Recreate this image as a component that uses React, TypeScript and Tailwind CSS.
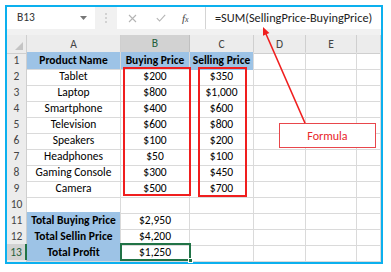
const FONT = '"Carlito", "Lato", "Liberation Sans", sans-serif';

type Row = {
  n: number;
  a?: string;
  b?: string;
  c?: string;
  head?: boolean;
  total?: boolean;
};

const rows: Row[] = [
  { n: 1, a: "Product Name", b: "Buying Price", c: "Selling Price", head: true },
  { n: 2, a: "Tablet", b: "$200", c: "$350" },
  { n: 3, a: "Laptop", b: "$800", c: "$1,000" },
  { n: 4, a: "Smartphone", b: "$400", c: "$600" },
  { n: 5, a: "Television", b: "$600", c: "$800" },
  { n: 6, a: "Speakers", b: "$100", c: "$200" },
  { n: 7, a: "Headphones", b: "$50", c: "$100" },
  { n: 8, a: "Gaming Console", b: "$300", c: "$450" },
  { n: 9, a: "Camera", b: "$500", c: "$700" },
  { n: 10 },
  { n: 11, a: "Total Buying Price", b: "$2,950", total: true },
  { n: 12, a: "Total Sellin Price", b: "$4,200", total: true },
  { n: 13, a: "Total Profit", b: "$1,250", total: true },
];

const cols = "grid grid-cols-[20px_94px_69px_64px_52px_51px_24px] shrink-0";
const cell = "border-r border-b border-[#dadada] flex items-center justify-center text-[11.5px] text-black whitespace-nowrap";

function FormulaBar() {
  return (
    <div className="flex h-[22px] shrink-0 bg-[#f1f1f1]">
      <div className="w-[88px] bg-white flex items-center justify-between pl-[10px] pr-[8px] text-[11.5px] text-[#333]">
        <span>B13</span>
        <svg width="7" height="4" viewBox="0 0 7 4">
          <path d="M0 0 L7 0 L3.5 4 Z" fill="#777" />
        </svg>
      </div>
      <div className="w-[22px] flex items-center justify-center">
        <svg width="2" height="10" viewBox="0 0 2 10">
          <circle cx="1" cy="1" r="0.8" fill="#aaa" />
          <circle cx="1" cy="5" r="0.8" fill="#aaa" />
          <circle cx="1" cy="9" r="0.8" fill="#aaa" />
        </svg>
      </div>
      <div className="flex-1 bg-white flex items-center">
        <div className="w-[89px] h-full flex items-center border-r border-[#d4d4d4]">
          <svg className="ml-[11px]" width="9" height="9" viewBox="0 0 9 9">
            <path d="M1 1 L8 8 M8 1 L1 8" stroke="#b4b4b4" strokeWidth="1.1" />
          </svg>
          <svg className="ml-[19px]" width="10" height="8" viewBox="0 0 10 8">
            <path d="M0.8 4.2 L3.6 7 L9.2 0.8" stroke="#b4b4b4" strokeWidth="1.1" fill="none" />
          </svg>
          <span className="ml-[16px] italic text-[11px] text-[#444]" style={{ fontFamily: '"Liberation Serif", serif' }}>
            f<span className="text-[8px]">x</span>
          </span>
        </div>
        <span className="ml-[9px] text-[12.3px] text-[#222] whitespace-nowrap">=SUM(SellingPrice-BuyingPrice)</span>
      </div>
    </div>
  );
}

function HeaderRow() {
  const letters = ["A", "B", "C", "D", "E", ""];
  return (
    <div className={`${cols} h-[17px]`}>
      <div className="bg-[#ececec] border-r border-b border-[#cfcfcf] relative">
        <svg className="absolute right-[3px] bottom-[3px]" width="8" height="8" viewBox="0 0 8 8">
          <path d="M8 0 L8 8 L0 8 Z" fill="#c4c4c4" />
        </svg>
      </div>
      {letters.map((l, i) =>
        l === "B" ? (
          <div
            key={i}
            className="bg-[#d2d2d2] border-r border-[#c0c0c0] border-b-2 border-b-[#217346] flex items-center justify-center text-[11.5px] text-[#1e5e3a]"
          >
            {l}
          </div>
        ) : (
          <div
            key={i}
            className="bg-[#ececec] border-r border-b border-[#cfcfcf] flex items-center justify-center text-[11.5px] text-[#444]"
          >
            {l}
          </div>
        )
      )}
    </div>
  );
}

function DataRow({ r }: { r: Row }) {
  const sel = r.n === 13;
  const blueA = r.head || r.total;
  return (
    <div className={`${cols} h-[16px]`}>
      <div
        className={
          sel
            ? "bg-[#d2d2d2] border-b border-[#c0c0c0] border-r-2 border-r-[#217346] flex items-center justify-center text-[11.5px] text-[#1e5e3a]"
            : "bg-[#ececec] border-r border-b border-[#cfcfcf] flex items-center justify-center text-[11.5px] text-[#444]"
        }
      >
        {r.n}
      </div>
      <div className={`${cell} ${blueA ? "bg-[#9dc3e6] border-[#9dc3e6] font-bold" : ""}`}>{r.a}</div>
      <div className={`${cell} ${r.head ? "bg-[#9dc3e6] border-[#9dc3e6] font-bold" : ""}`}>{r.b}</div>
      <div className={`${cell} ${r.head ? "bg-[#9dc3e6] border-b-[#9dc3e6] font-bold" : ""}`}>{r.c}</div>
      <div className={cell} />
      <div className={cell} />
      <div className={cell} />
    </div>
  );
}

export default function App() {
  return (
    <div className="relative w-[391px] h-[272px] bg-white pl-[5px] pt-[5px]" style={{ fontFamily: FONT }}>
      <div className="w-[378px] h-[259px] border-2 border-[#0cb0ee] flex flex-col overflow-hidden bg-white">
        <FormulaBar />
        <div className="h-[6px] shrink-0 bg-[#f1f1f1]" />
        <HeaderRow />
        {rows.map((r) => (
          <DataRow key={r.n} r={r} />
        ))}
        <div className={`${cols} h-[16px]`}>
          <div className="bg-[#ececec] border-r border-[#cfcfcf]" />
          <div className="border-r border-[#dadada]" />
          <div className="border-r border-[#dadada]" />
          <div className="border-r border-[#dadada]" />
          <div className="border-r border-[#dadada]" />
          <div className="border-r border-[#dadada]" />
        </div>
      </div>

      {/* red highlight boxes */}
      <div className="absolute left-[123px] top-[67px] w-[68px] h-[129px] border-2 border-[#f01e1e]" />
      <div className="absolute left-[198px] top-[67px] w-[49px] h-[130px] border-2 border-[#f01e1e]" />

      {/* selected cell B13 */}
      <div className="absolute left-[120px] top-[243px] w-[71px] h-[18px] border-2 border-[#217346]" />
      <div className="absolute left-[188px] top-[258px] w-[5px] h-[5px] bg-[#217346] border border-white" />

      {/* callout */}
      <div className="absolute left-[279px] top-[123px] w-[97px] h-[25px] bg-white border border-[#e8464b] flex items-center justify-center text-[12px] text-[#e8262a]">
        Formula
      </div>
      <svg className="absolute left-0 top-0" width="391" height="272" viewBox="0 0 391 272">
        <line x1="305" y1="123" x2="266" y2="34" stroke="#f01e1e" strokeWidth="1.6" />
        <polygon points="263,27 269.4,32.9 263,35.7" fill="#f01e1e" />
      </svg>
    </div>
  );
}
